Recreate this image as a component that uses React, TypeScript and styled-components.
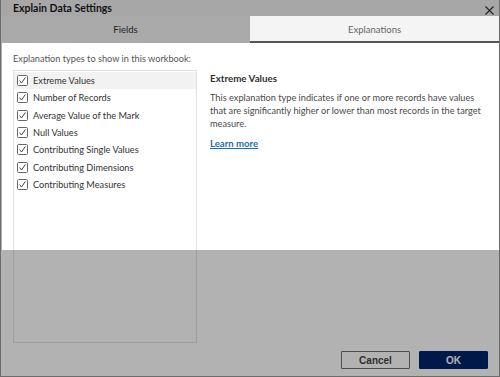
import React from 'react';
import styled, { createGlobalStyle } from 'styled-components';

const GlobalStyle = createGlobalStyle`
  html, body {
    margin: 0;
    padding: 0;
    background: #ffffff;
  }
  body {
    font-family: 'Lato', 'Liberation Sans', sans-serif;
    color: #333333;
  }
`;

const Dialog = styled.div`
  position: relative;
  width: 498px;
  height: 376px;
  border: 1px solid #6c6c6c;
  border-top: none;
  background: #ffffff;
  display: flex;
  flex-direction: column;
`;

const TitleBar = styled.div`
  height: 16px;
  display: flex;
  align-items: center;
  justify-content: space-between;
  padding: 0 5px 0 12px;
  background: #efefef;
  font-size: 10.5px;
  font-weight: 700;
  color: #1a1a1a;
`;

const Close = styled.svg`
  width: 9px;
  height: 9px;
  margin-top: 6px;
  align-self: flex-start;
`;

const Tabs = styled.div`
  display: flex;
  height: 27px;
`;

const Tab = styled.div<{ $active?: boolean }>`
  flex: 1;
  display: flex;
  align-items: center;
  justify-content: center;
  padding-top: 2px;
  background: #f4f4f4;
  font-size: 9.5px;
  color: ${(p) => (p.$active ? '#666666' : '#333333')};
  border-bottom: 2px solid ${(p) => (p.$active ? '#555555' : 'transparent')};
  box-sizing: border-box;
`;

const Body = styled.div`
  flex: 1;
  display: flex;
  flex-direction: column;
  padding: 10px 11px 7px 12px;
  box-sizing: border-box;
`;

const Lead = styled.div`
  font-size: 9.2px;
  color: #555555;
  margin-bottom: 6px;
`;

const Columns = styled.div`
  display: flex;
  gap: 13px;
  height: 273px;
`;

const List = styled.div`
  width: 184px;
  border: 1px solid #e2e2e2;
  padding-top: 1px;
  box-sizing: border-box;
`;

const Row = styled.div<{ $selected?: boolean }>`
  height: 17.3px;
  display: flex;
  align-items: center;
  gap: 5px;
  padding-left: 3px;
  background: ${(p) => (p.$selected ? '#f2f2f2' : 'transparent')};
  font-size: 9.2px;
  color: #333333;
`;

const Box = styled.svg`
  width: 11px;
  height: 11px;
  flex: none;
`;

const Detail = styled.div`
  flex: 1;
  padding-top: 2px;
  padding-right: 6px;
`;

const DetailTitle = styled.div`
  font-size: 9.8px;
  font-weight: 700;
  color: #333333;
  margin-bottom: 7px;
`;

const DetailText = styled.p`
  margin: 0 0 1px;
  font-size: 9.2px;
  line-height: 13px;
  color: #4a4a4a;
`;

const LearnMore = styled.a`
  font-size: 9.6px;
  font-weight: 700;
  color: #1f6fb2;
  text-decoration: underline;
`;

const Footer = styled.div`
  margin-top: auto;
  display: flex;
  justify-content: flex-end;
  gap: 9px;
`;

const Button = styled.button<{ $primary?: boolean }>`
  width: 69px;
  height: 18px;
  padding: 0;
  font-family: 'Liberation Sans', sans-serif;
  font-size: 10px;
  font-weight: 700;
  border-radius: 1px;
  border: 1px solid ${(p) => (p.$primary ? '#00246c' : '#6e6e6e')};
  background: ${(p) => (p.$primary ? '#00246c' : '#ffffff')};
  color: ${(p) => (p.$primary ? '#ffffff' : '#444444')};
`;

const Shade = styled.div`
  position: absolute;
  inset: 0;
  background: rgba(0, 0, 0, 0.3);
  pointer-events: none;
  clip-path: path(evenodd, 'M0 0H498V376H0Z M1 43H249V16H498V250H1Z');
`;

const items = [
  'Extreme Values',
  'Number of Records',
  'Average Value of the Mark',
  'Null Values',
  'Contributing Single Values',
  'Contributing Dimensions',
  'Contributing Measures',
];

const Check = () => (
  <Box viewBox="0 0 11 11">
    <rect x="0.5" y="0.5" width="10" height="10" rx="1" fill="#fff" stroke="#666" />
    <path d="M2.6 5.6 L4.5 8 L8.4 2.4" fill="none" stroke="#444" strokeWidth="1" />
  </Box>
);

const App = () => (
  <>
    <GlobalStyle />
    <Dialog>
      <TitleBar>
        Explain Data Settings
        <Close viewBox="0 0 9 9">
          <path d="M0.5 0.5 L8.5 8.5 M8.5 0.5 L0.5 8.5" stroke="#333" strokeWidth="1.1" />
        </Close>
      </TitleBar>
      <Tabs>
        <Tab>Fields</Tab>
        <Tab $active>Explanations</Tab>
      </Tabs>
      <Body>
        <Lead>Explanation types to show in this workbook:</Lead>
        <Columns>
          <List>
            {items.map((item, i) => (
              <Row key={item} $selected={i === 0}>
                <Check />
                {item}
              </Row>
            ))}
          </List>
          <Detail>
            <DetailTitle>Extreme Values</DetailTitle>
            <DetailText>
              This explanation type indicates if one or more records have values that are
              significantly higher or lower than most records in the target measure.
            </DetailText>
            <LearnMore href="#">Learn more</LearnMore>
          </Detail>
        </Columns>
        <Footer>
          <Button>Cancel</Button>
          <Button $primary>OK</Button>
        </Footer>
      </Body>
      <Shade />
    </Dialog>
  </>
);

export default App;
